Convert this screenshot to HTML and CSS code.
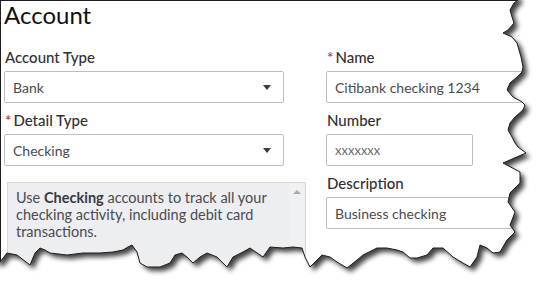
FILE: index.html
```html
<!DOCTYPE html>
<html>
<head>
	<meta charset="utf-8">
	<title>Account</title>
	<link rel="stylesheet" href="styles.css">
</head>
<body>

	<div class="frame">
		<div class="sheet">
			<h1 class="title">Account</h1>

			<div class="form">
				<div class="col">
					<div class="field">
						<label class="label">Account Type</label>
						<div class="select"><span>Bank</span><span class="caret"></span></div>
					</div>
					<div class="field">
						<label class="label"><span class="req">*</span>Detail Type</label>
						<div class="select"><span>Checking</span><span class="caret"></span></div>
					</div>
					<div class="info">
						<p>Use <b>Checking</b> accounts to track all your checking activity, including debit card transactions.</p>
						<div class="track"><span class="up"></span></div>
					</div>
				</div>

				<div class="col">
					<div class="field">
						<label class="label" for="name"><span class="req">*</span>Name</label>
						<input class="input wide" type="text" id="name" value="Citibank checking 1234">
					</div>
					<div class="field">
						<label class="label" for="number">Number</label>
						<input class="input short small" type="text" id="number" value="xxxxxxx">
					</div>
					<div class="field">
						<label class="label" for="desc">Description</label>
						<input class="input wide" type="text" id="desc" value="Business checking">
					</div>
				</div>
			</div>
		</div>

		<!-- рваный край скриншота -->
		<svg class="torn" width="549" height="289" viewBox="0 0 549 289">
			<defs>
				<path id="paper" d="M-5,-5 L518,-5 L518,0 L514,3 L510,10 L512,17 L514,23 L508,30 L503,33 L512,37 L517,43 L519,50 L521,57 L523,67 L522,72 L517,77 L510,83 L507,90 L513,97 L522,102 L525,105 L523,110 L515,117 L510,123 L508,130 L512,137 L515,143 L518,147 L526,153 L503,163 L520,172 L520,183 L510,193 L508,202 L515,212 L512,220 L510,225 L515,232 L512,235 L507,240 L500,252 L493,253 L487,248 L480,245 L477,257 L470,267 L463,263 L453,257 L443,248 L433,248 L427,255 L417,258 L410,258 L403,252 L397,250 L387,248 L377,248 L363,255 L357,260 L347,268 L337,262 L330,257 L322,255 L317,260 L310,267 L305,257 L302,248 L293,247 L283,248 L270,247 L263,257 L260,255 L250,248 L243,252 L233,257 L227,267 L217,257 L207,253 L200,257 L193,263 L187,257 L182,253 L175,255 L170,263 L160,267 L147,267 L140,263 L137,252 L132,245 L128,247 L123,250 L113,252 L100,253 L83,253 L67,255 L50,253 L45,250 L40,248 L35,253 L30,265 L17,255 L7,253 L0,262 L-5,262 Z"/>
				<filter id="soft" x="-10%" y="-10%" width="120%" height="120%">
					<feGaussianBlur stdDeviation="2.5"/>
				</filter>
				<mask id="outside">
					<rect x="0" y="0" width="549" height="289" fill="#fff"/>
					<use href="#paper" fill="#000"/>
				</mask>
			</defs>
			<rect x="0" y="0" width="549" height="289" fill="#fff" mask="url(#outside)"/>
			<g mask="url(#outside)">
				<use href="#paper" fill="#000" opacity="0.75" filter="url(#soft)" transform="translate(4,4)"/>
			</g>
			<use href="#paper" fill="none" stroke="#1e1e1e" stroke-width="1"/>
		</svg>
	</div>

</body>
</html>
```

FILE: styles.css
```css
body {
	margin: 0;
	background: #fff;
	font-family: Lato, "Open Sans", sans-serif;
	color: #393a3d;
}

.frame {
	position: relative;
	width: 549px;
	height: 289px;
	overflow: hidden;
}

.sheet {
	box-sizing: border-box;
	height: 289px;
	border-top: 1px solid #1e1e1e;
	border-left: 1px solid #1e1e1e;
	padding-left: 3px;
}

.title {
	margin: 0;
	font-size: 24px;
	font-weight: 400;
	line-height: 28px;
	color: #111;
}

.form {
	display: grid;
	grid-template-columns: 302px 1fr;
	column-gap: 20px;
	margin-top: 18px;
}

.col {
	display: flex;
	flex-direction: column;
	gap: 7px;
}

.field {
	display: flex;
	flex-direction: column;
	gap: 4px;
}

.label {
	font-size: 15px;
	font-weight: 500;
	line-height: 20px;
	padding-left: 1px;
	color: #2f3033;
}

.req {
	color: #d52b1e;
	margin-right: 2px;
}

.select {
	box-sizing: border-box;
	width: 280px;
	height: 32px;
	display: flex;
	align-items: center;
	justify-content: space-between;
	padding: 0 12px 0 8px;
	border: 1px solid #babec5;
	border-radius: 2px;
	font-size: 14px;
	color: #4a4b4f;
}

.caret {
	border-left: 4px solid transparent;
	border-right: 4px solid transparent;
	border-top: 5px solid #393a3d;
}

.input {
	box-sizing: border-box;
	height: 32px;
	padding: 0 8px;
	border: 1px solid #babec5;
	border-radius: 2px;
	font-family: inherit;
	font-size: 14px;
	color: #4a4b4f;
	outline: none;
}

.wide {
	width: 200px;
}

.short {
	width: 147px;
}

.small {
	font-size: 13px;
	color: #6b6c72;
}

.info {
	display: flex;
	height: 100px;
	margin: 9px 0 0 3px;
	background: #eceef1;
	border: 1px solid #d4d7dc;
}

.info p {
	width: 266px;
	margin: 0;
	padding: 6px 0 0 8px;
	font-size: 14.5px;
	line-height: 17px;
	color: #4a4b4f;
}

.info b {
	font-weight: 700;
	color: #393a3d;
}

.track {
	margin-left: auto;
	width: 16px;
	display: flex;
	justify-content: center;
	padding-top: 7px;
	background: #f0f1f3;
}

.up {
	width: 0;
	height: 0;
	border-left: 4px solid transparent;
	border-right: 4px solid transparent;
	border-bottom: 4px solid #a9abb0;
}

.torn {
	position: absolute;
	top: 0;
	left: 0;
	pointer-events: none;
}
```
